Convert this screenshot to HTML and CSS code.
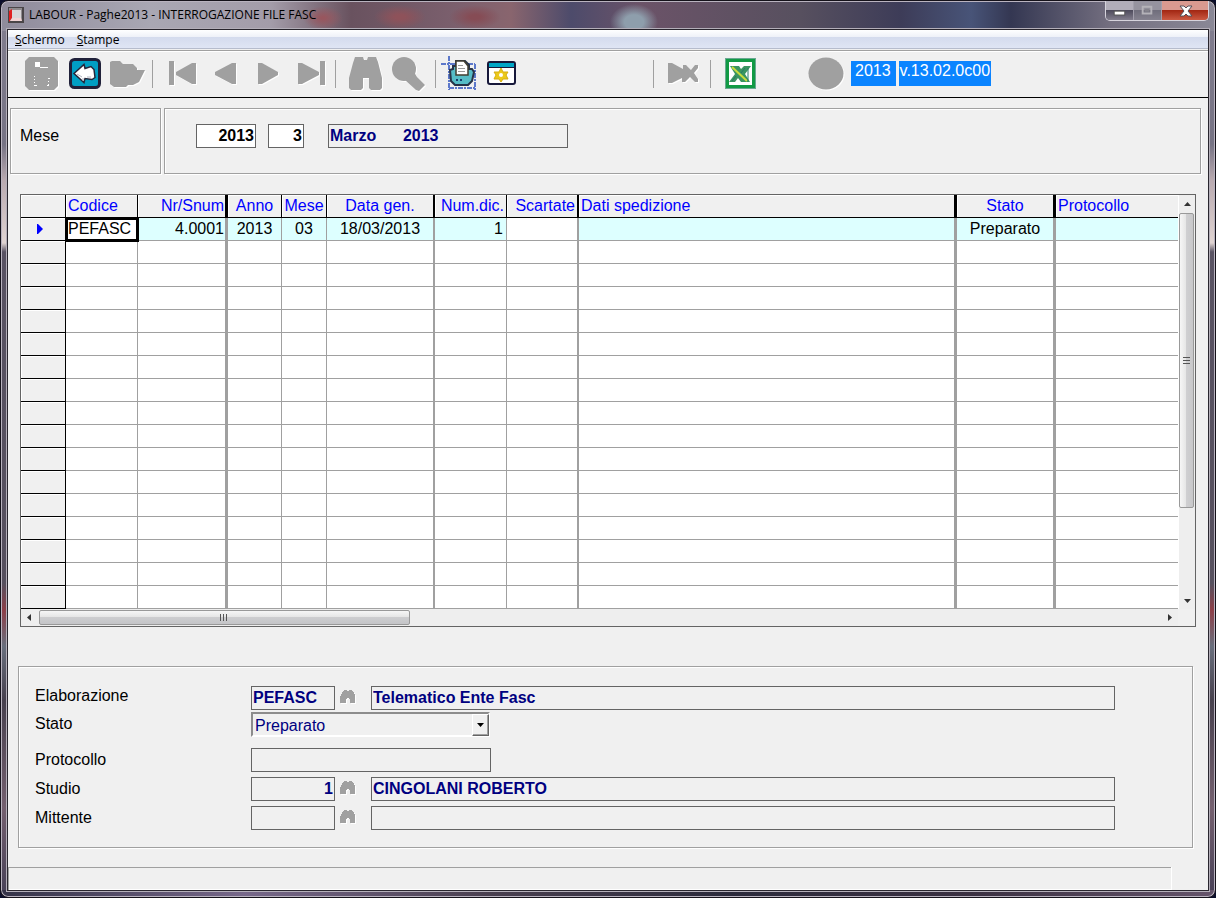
FILE: index.html
```html
<!DOCTYPE html>
<html lang="it">
<head>
<meta charset="utf-8">
<title>LABOUR - Paghe2013 - INTERROGAZIONE FILE FASC</title>
<link rel="stylesheet" href="styles.css">
</head>
<body>
<svg class="defs" aria-hidden="true">
  <symbol id="binoculars" viewBox="0 0 16 16"><path d="M3 2h1V1h3v1h2V1h3v1h1v1h1v2h1v9h-5v-4H9V9H7v1H6v4H0V7h1V5h1V3h1z"/></symbol>
</svg>
<div class="window">
  <header class="titlebar">
    <svg class="app-icon" viewBox="0 0 16 16"><rect width="16" height="16" fill="#4a4648"/><rect x="1" y="1" width="13" height="13" fill="#8f8b8e"/><path d="M4 3h9v9H4z" fill="#d8d6d8"/><path d="M1 4l3-2v9l-3 4z" fill="#e02020"/><path d="M2 14l2-3h9l1 3z" fill="#f1d5d5"/></svg>
    <h1 class="title">LABOUR - Paghe2013 - INTERROGAZIONE FILE FASC</h1>
    <div class="window-buttons">
      <button class="wbtn wbtn-min" aria-label="Riduci a icona"><svg viewBox="0 0 28 18"><rect x="8.500" y="9.500" width="11" height="4" fill="#fff" stroke="#555"/></svg></button>
      <button class="wbtn wbtn-max" aria-label="Ingrandisci"><svg viewBox="0 0 28 18"><path d="M9 5h9v7H9z" fill="none" stroke="#b4b2b8" stroke-width="2"/><path d="M11 7h5v3h-5z" fill="#85838c"/></svg></button>
      <button class="wbtn wbtn-close" aria-label="Chiudi"><svg viewBox="0 0 46 18"><path d="M18 4h4l2 2 2-2h4l-4 5 4 5h-4l-2-2-2 2h-4l4-5z" fill="#fff" stroke="#53505a"/></svg></button>
    </div>
  </header>
  <div class="client">
    <nav class="menubar">
      <a href="#schermo"><u>S</u>chermo</a>
      <a href="#stampe"><u>S</u>tampe</a>
    </nav>
    <div class="toolbar">
      <div class="tools">
        <button class="tool" aria-label="Salva"><svg class="off" viewBox="0 0 43 44"><path d="M9 5h25l4 4v25l-4 4H9l-4-4V9z"/><path d="M15 10h5v5h-5zM20 15h8v1h-8z" fill="#fff"/><path d="M14.500 24v10M28.500 26v8" fill="none" stroke="#fff" stroke-dasharray="1 2"/><path d="M15 33.500h2M28 26.500h2M27 33.500h2" stroke="#fff"/></svg></button>
        <button class="tool" aria-label="Indietro"><svg viewBox="0 0 43 44"><rect x="7.500" y="7.500" width="29" height="28" rx="4" fill="#009fc4" stroke="#20213a" stroke-width="3"/><path d="M11 21.500l10-9 1 4 6-2 3 3 1 8-3 2-7-1-1 4z" fill="#fff" stroke="#26263a" stroke-width="1.500"/><path d="M14 22l5 3M20 26v3M24 25h4" stroke="#b0b4c0" fill="none"/></svg></button>
        <button class="tool" aria-label="Apri"><svg class="off" viewBox="0 0 43 44"><path d="M4 10l2-1h8l3 3h10l4 4v2h8l-6 12-6 3h-5l-2 2H8l-4-3z"/></svg></button>
      </div>
      <div class="tools ruled">
        <button class="tool" aria-label="Primo"><svg class="off" viewBox="0 0 43 44"><path d="M8 9h5v24H8zM35 11v21h-4l-16-9v-3l16-9z"/></svg></button>
        <button class="tool" aria-label="Precedente"><svg class="off" viewBox="0 0 43 44"><path d="M32 11v21h-4l-17-9v-3l17-9z"/></svg></button>
        <button class="tool" aria-label="Successivo"><svg class="off" viewBox="0 0 43 44"><path d="M11 11v21h4l16-9v-3l-16-9z"/></svg></button>
        <button class="tool" aria-label="Ultimo"><svg class="off" viewBox="0 0 43 44"><path d="M30 9h5v24h-5zM8 11v21h4l17-9v-3l-17-9z"/></svg></button>
      </div>
      <div class="tools ruled ruled-find">
        <button class="tool" aria-label="Cerca"><svg class="off" viewBox="0 0 43 44"><path d="M11 5h8l1 3h3l1-3h8l2 5 4 16v10l-2 2h-9l-2-2V26h-6v10l-2 2H7l-2-2V26L9 11z"/></svg></button>
        <button class="tool" aria-label="Zoom"><svg class="off" viewBox="0 0 43 44"><circle cx="17" cy="17" r="12"/><path d="M18 28l9-8 3 5 8 8-6 6-3-1z"/></svg></button>
      </div>
      <div class="tools ruled ruled-print">
        <button class="tool" aria-label="Stampa"><svg viewBox="0 0 43 44"><path d="M12 4v34M4 12h34M12 36h27M38 12v26" fill="none" stroke="#5c78ca" stroke-width="2" stroke-dasharray="5 1 2 1"/><path d="M13 18l3-1v-3h3V9h9l4 4v4h3l2 3-2 9-4 4H18l-4-4z" fill="#56bcc6" stroke="#273348" stroke-width="2"/><path d="M19 23V9h8l4 5v9z" fill="#fff" stroke="#423e30" stroke-width="1.500"/><path d="M21 13.500h5M21 16.500h7M21 19.500h7" stroke="#999"/><path d="M19 28h2M23 28h2" stroke="#183b6b" stroke-width="2"/></svg></button>
        <button class="tool" aria-label="Finestra"><svg viewBox="0 0 43 44"><rect x="8" y="10" width="27" height="22" rx="2" fill="#fff" stroke="#17183a" stroke-width="2"/><path d="M9 11h25v4H9z" fill="#00a5c5"/><path d="M9 15.500h25" stroke="#17183a"/><path d="M21 16l2 4h5l-2 3 2 4h-5l-2 3-2-3h-5l2-4-2-3h5z" fill="#ecc919" stroke="#d6ae10"/><circle cx="21" cy="23" r="2" fill="#fff"/></svg></button>
      </div>
      <div class="tools ruled ruled-run">
        <button class="tool" aria-label="Esegui"><svg class="off" viewBox="0 0 43 44"><path d="M6 11h4l11 6v-4h3l5 5 4-5h3v3l-4 5 4 6v3h-3l-5-5-5 5h-3v-4l-10 5H6z"/></svg></button>
      </div>
      <div class="tools ruled ruled-excel">
        <button class="tool" aria-label="Esporta in Excel"><svg viewBox="0 0 43 44"><rect x="6" y="6" width="31" height="31" fill="#6aa892"/><rect x="8.500" y="8.500" width="26" height="26" fill="#fff" stroke="#129a45" stroke-width="3"/><path d="M11 14h9l2 3 3-3h7l-6 8 5 8h-9l-3-4-3 4h-6l6-8z" fill="#3a9560"/><path d="M13 15l15 14" stroke="#c8dc3c" stroke-width="2"/><path d="M26 16l-4 5M17 24l-4 5M29 16v13" stroke="#257a62" fill="none"/></svg></button>
      </div>
      <svg class="off lamp" viewBox="0 0 36 44"><ellipse cx="18" cy="21.500" rx="17.500" ry="16"/></svg>
      <div class="release"><span>2013</span><span>v.13.02.0c00</span></div>
    </div>

    <main>
      <section class="filters">
        <div class="panel filter-name"><label for="anno">Mese</label></div>
        <div class="panel filter-fields">
          <input class="field edit num year" id="anno" value="2013">
          <input class="field edit num month" aria-label="Numero mese" value="3">
          <input class="field period" aria-label="Periodo" value="Marzo      2013" readonly>
        </div>
      </section>

      <section class="grid">
        <table>
          <colgroup><col class="c-mark"><col class="c-codice"><col class="c-nr"><col class="c-anno"><col class="c-mese"><col class="c-data"><col class="c-num"><col class="c-scartate"><col class="c-dati"><col class="c-stato"><col></colgroup>
          <thead><tr><th></th><th>Codice</th><th class="r w3">Nr/Snum</th><th class="c">Anno</th><th class="c">Mese</th><th class="c w2">Data gen.</th><th class="r pad">Num.dic.</th><th class="r w2">Scartate</th><th class="w3">Dati spedizione</th><th class="c w3">Stato</th><th class="last">Protocollo</th></tr></thead>
          <tbody>
            <tr class="current"><th><svg class="marker" viewBox="0 0 6 10"><path d="M0 0h1l5 5-5 5H0z"/></svg></th><td class="focus">PEFASC</td><td class="r w3">4.0001</td><td class="c">2013</td><td class="c">03</td><td class="c w2">18/03/2013</td><td class="r pad">1</td><td class="blank w2"></td><td class="w3"></td><td class="c w3">Preparato</td><td class="last"></td></tr>
            <tr><th></th><td></td><td class="w3"></td><td></td><td></td><td class="w2"></td><td></td><td class="w2"></td><td class="w3"></td><td class="w3"></td><td class="last"></td></tr>
            <tr><th></th><td></td><td class="w3"></td><td></td><td></td><td class="w2"></td><td></td><td class="w2"></td><td class="w3"></td><td class="w3"></td><td class="last"></td></tr>
            <tr><th></th><td></td><td class="w3"></td><td></td><td></td><td class="w2"></td><td></td><td class="w2"></td><td class="w3"></td><td class="w3"></td><td class="last"></td></tr>
            <tr><th></th><td></td><td class="w3"></td><td></td><td></td><td class="w2"></td><td></td><td class="w2"></td><td class="w3"></td><td class="w3"></td><td class="last"></td></tr>
            <tr><th></th><td></td><td class="w3"></td><td></td><td></td><td class="w2"></td><td></td><td class="w2"></td><td class="w3"></td><td class="w3"></td><td class="last"></td></tr>
            <tr><th></th><td></td><td class="w3"></td><td></td><td></td><td class="w2"></td><td></td><td class="w2"></td><td class="w3"></td><td class="w3"></td><td class="last"></td></tr>
            <tr><th></th><td></td><td class="w3"></td><td></td><td></td><td class="w2"></td><td></td><td class="w2"></td><td class="w3"></td><td class="w3"></td><td class="last"></td></tr>
            <tr><th></th><td></td><td class="w3"></td><td></td><td></td><td class="w2"></td><td></td><td class="w2"></td><td class="w3"></td><td class="w3"></td><td class="last"></td></tr>
            <tr><th></th><td></td><td class="w3"></td><td></td><td></td><td class="w2"></td><td></td><td class="w2"></td><td class="w3"></td><td class="w3"></td><td class="last"></td></tr>
            <tr><th></th><td></td><td class="w3"></td><td></td><td></td><td class="w2"></td><td></td><td class="w2"></td><td class="w3"></td><td class="w3"></td><td class="last"></td></tr>
            <tr><th></th><td></td><td class="w3"></td><td></td><td></td><td class="w2"></td><td></td><td class="w2"></td><td class="w3"></td><td class="w3"></td><td class="last"></td></tr>
            <tr><th></th><td></td><td class="w3"></td><td></td><td></td><td class="w2"></td><td></td><td class="w2"></td><td class="w3"></td><td class="w3"></td><td class="last"></td></tr>
            <tr><th></th><td></td><td class="w3"></td><td></td><td></td><td class="w2"></td><td></td><td class="w2"></td><td class="w3"></td><td class="w3"></td><td class="last"></td></tr>
            <tr><th></th><td></td><td class="w3"></td><td></td><td></td><td class="w2"></td><td></td><td class="w2"></td><td class="w3"></td><td class="w3"></td><td class="last"></td></tr>
            <tr><th></th><td></td><td class="w3"></td><td></td><td></td><td class="w2"></td><td></td><td class="w2"></td><td class="w3"></td><td class="w3"></td><td class="last"></td></tr>
            <tr><th></th><td></td><td class="w3"></td><td></td><td></td><td class="w2"></td><td></td><td class="w2"></td><td class="w3"></td><td class="w3"></td><td class="last"></td></tr>
          </tbody>
        </table>
        <div class="scroll scroll-v">
          <button class="arrow" aria-label="Scorri su"><svg viewBox="0 0 17 17"><path d="M5 10l3.500-4 3.500 4z"/></svg></button>
          <div class="track"><div class="thumb"><svg viewBox="0 0 8 8"><path d="M0 1.500h7M0 4.500h7M0 7.500h7"/></svg></div></div>
          <button class="arrow" aria-label="Scorri giù"><svg viewBox="0 0 17 17"><path d="M5 7l3.500 4 3.500-4z"/></svg></button>
        </div>
        <div class="scroll scroll-h">
          <button class="arrow" aria-label="Scorri a sinistra"><svg viewBox="0 0 17 17"><path d="M10 5L6 8.500 10 12z"/></svg></button>
          <div class="track"><div class="thumb"><svg viewBox="0 0 8 8"><path d="M.5 0v7M3.500 0v7M6.500 0v7"/></svg></div></div>
          <button class="arrow" aria-label="Scorri a destra"><svg viewBox="0 0 17 17"><path d="M7 5l4 3.500L7 12z"/></svg></button>
        </div>
      </section>

      <section class="panel details">
        <div class="row first">
          <label for="elab">Elaborazione</label>
          <input class="field code" id="elab" value="PEFASC" readonly>
          <button class="lookup" aria-label="Cerca elaborazione"><svg><use href="#binoculars"/></svg></button>
          <input class="field wide" aria-label="Descrizione elaborazione" value="Telematico Ente Fasc" readonly>
        </div>
        <div class="row state">
          <label for="stato">Stato</label>
          <div class="combo">
            <select id="stato"><option>Preparato</option></select>
            <span class="drop"><svg viewBox="0 0 7 4"><path d="M0 0h7L3.500 4z"/></svg></span>
          </div>
        </div>
        <div class="row">
          <label for="prot">Protocollo</label>
          <input class="field protocol" id="prot" readonly>
        </div>
        <div class="row">
          <label for="studio">Studio</label>
          <input class="field code num" id="studio" value="1" readonly>
          <button class="lookup" aria-label="Cerca studio"><svg><use href="#binoculars"/></svg></button>
          <input class="field wide" aria-label="Nome studio" value="CINGOLANI ROBERTO" readonly>
        </div>
        <div class="row">
          <label for="mitt">Mittente</label>
          <input class="field code num" id="mitt" readonly>
          <button class="lookup" aria-label="Cerca mittente"><svg><use href="#binoculars"/></svg></button>
          <input class="field wide" aria-label="Nome mittente" readonly>
        </div>
      </section>
    </main>
    <footer class="statusbar"></footer>
  </div>
</div>
</body>
</html>
```

FILE: styles.css
```css
* { box-sizing: border-box; }

body {
  margin: 0;
  background: #0a0d2a;
  color: #000;
  font: 16px/22px "Liberation Sans", Arial, sans-serif;
}

button, input, select { font: inherit; margin: 0; }
button { padding: 0; border: 0; background: none; }
svg { display: block; }
.defs { display: none; }

/* Window frame */
.window {
  display: flex;
  flex-direction: column;
  min-height: 100vh;
  padding: 0 6px 6px;
  border: 1px solid #15121a;
  border-radius: 8px;
  box-shadow: inset 0 0 0 1px #b9b3bf;
  background:
    radial-gradient(ellipse 26px 12px at 399px 16px, #8e525a 20%, transparent),
    radial-gradient(ellipse 26px 12px at 474px 16px, #864c55 20%, transparent),
    radial-gradient(ellipse 20px 12px at 322px 17px, #98565e 10%, transparent),
    radial-gradient(ellipse 24px 18px at 633px 21px, #8e9eac 40%, transparent),
    linear-gradient(90deg, #8f8b9b 0, #a9a7b3 150px, #a39ca9 270px, #69525f 350px, #7c606e 460px, #89656e 510px, #4d4b6b 570px, #6b5368 640px, #57505f 800px, #3d3c58 900px, #485478 970px, #343752 1010px, #746f80 1110px, #8a8896 100%) 0 0 / 100% 30px no-repeat,
    linear-gradient(90deg, #343348, #77688a 20%, #4a4050 40%, #2c2b3c 60%, #3b3142 80%, #65546b) 0 100% / 100% 7px no-repeat,
    linear-gradient(#837f90, #767384 16%, #b9aab0 20%, #e0d4d2 27%, #595363 28%, #56505e 65%, #8d3f48 68%, #696f7d 72%, #47414e 78%, #74606f 90%, #464056);
}

.titlebar { display: flex; height: 28px; align-items: center; padding-left: 1px; }
.app-icon { width: 16px; height: 16px; }
.title {
  flex: 1;
  margin: 0;
  padding-left: 5px;
  font: 12px/16px "Open Sans", "Noto Sans", sans-serif;
}
.window-buttons {
  display: flex;
  align-self: flex-start;
  height: 20px;
  border: 1px solid #d6d3dc;
  border-top: 0;
  border-radius: 0 0 5px 5px;
  overflow: hidden;
}
.wbtn {
  width: 28px;
  height: 19px;
  border-right: 1px solid #a29fac;
  background: linear-gradient(#b1adb9 50%, #4f4c5d 50%, #817d8c);
}
.wbtn-max { background: linear-gradient(#96939f 50%, #706e7c 50%, #85828f); }
.wbtn-close { width: 46px; border: 0; background: linear-gradient(#d99a90 50%, #a32814 50%, #cb5942); }

.client {
  display: flex;
  flex: 1;
  flex-direction: column;
  border: 1px solid #29262e;
  box-shadow: 0 0 0 1px #b4afb9;
  background: #f0f0f0;
}

/* Menu and toolbar */
.menubar {
  display: flex;
  gap: 12px;
  height: 22px;
  padding-left: 7px;
  border-bottom: 1px solid #fff;
  background: linear-gradient(#fff, #eef1f8 7px, #d4dbed 7px, #dfe5f4 18px, #b6bccc 18px, #b6bccc 19px, #f0f0f0 19px, #f0f0f0 20px, #a0a0a0 20px);
}
.menubar a { color: #000; font: 12px/20px "Open Sans", "Noto Sans", sans-serif; text-decoration: none; }

.toolbar { display: flex; height: 46px; padding-left: 12px; border-bottom: 1px solid #000; }
.tools { display: flex; }
.tool { width: 43px; height: 44px; }
.off { fill: #a0a0a0; filter: drop-shadow(1px 1px 0 #fff); }
.ruled { padding-left: 12px; background: linear-gradient(#a0a0a0, #a0a0a0) 3px 8px / 1px 28px no-repeat; }
.ruled-find { padding-left: 11px; background-position: 2px 8px; }
.ruled-print { padding-left: 7px; background-position: 5px 8px; }
.ruled-run { margin-left: 127px; }
.ruled-excel { padding-left: 14px; background-position: 5px 8px; }
.lamp { width: 36px; height: 44px; margin-left: 46px; }
.release { display: flex; gap: 3px; margin: 9px 0 0 7px; }
.release span { height: 25px; padding: 0 5px 0 4px; background: #0a84ff; color: #fff; line-height: 20px; }
.release span + span { padding: 0 1px; }

/* Etched panels and fields */
.panel { border: 1px solid #a0a0a0; box-shadow: 1px 1px 0 #fff, inset 1px 1px 0 #fff; }
.field {
  height: 24px;
  min-width: 0;
  padding: 0 1px;
  border: 1px solid #646464;
  border-radius: 0;
  outline: 0;
  background: #f0f0f0;
  color: #000080;
  font-weight: bold;
  white-space: pre;
}
.edit { background: #fff; color: #000; }
.num { text-align: right; }

main { flex: 1; }
.filters { display: flex; gap: 3px; margin: 10px 7px 0 2px; }
.filters .panel { height: 66px; padding-top: 15px; }
.filter-name { width: 151px; padding-left: 9px; }
.filter-name label { display: block; line-height: 24px; }
.filter-fields { display: flex; flex: 1; padding-left: 31px; }
.year { width: 60px; margin-right: 12px; }
.month { width: 36px; margin-right: 24px; }
.period { width: 240px; }

/* Data grid */
.grid {
  display: grid;
  grid-template-columns: 1fr 17px;
  grid-template-rows: auto 17px;
  margin: 20px 12px 0;
  border: 1px solid #646464;
}
table { width: 100%; border-collapse: separate; border-spacing: 0; table-layout: fixed; background: #fff; }
.c-mark, .c-mese { width: 45px; }
.c-codice, .c-num, .c-scartate { width: 72px; }
.c-nr { width: 90px; }
.c-anno { width: 54px; }
.c-data { width: 108px; }
.c-dati { width: 378px; }
.c-stato { width: 99px; }
th, td {
  height: 23px;
  padding: 0 2px;
  border: solid #a0a0a0;
  border-width: 0 1px 1px 0;
  font-weight: normal;
  line-height: 22px;
  text-align: left;
  white-space: nowrap;
}
th { border-color: #000; background: #f0f0f0; box-shadow: inset 1px 1px 0 #fff; color: #00f; }
.r { text-align: right; }
th.r, td.r { padding-right: 1px; }
.c { text-align: center; }
td.pad { padding-right: 3px; }
th.pad, th.w2 { padding-right: 2px; }
.w2 { border-right-width: 2px; }
.w3 { border-right-width: 3px; }
.last { border-right-width: 0; }
.current td { background: #dff; }
.current .focus { background: #fff; outline: 3px solid #000; outline-offset: -2px; }
.current .blank { background: #fff; }
.marker { width: 6px; height: 10px; margin: 0 auto; fill: #00f; }
tbody th { padding-right: 8px; }

.scroll { display: flex; background: #eee; }
.scroll-v { flex-direction: column; border-left: 1px solid #fff; }
.arrow { width: 17px; height: 17px; flex: none; }
.scroll-v .arrow { width: 16px; height: 18px; }
.arrow svg { width: 17px; height: 17px; fill: #333; }
.track { flex: 1; }
.thumb { display: flex; align-items: center; justify-content: center; border: 1px solid #999; border-radius: 2px; }
.thumb svg { width: 8px; height: 8px; stroke: #555; fill: none; }
.scroll-v .thumb { width: 15px; height: 78%; background: linear-gradient(90deg, #f6f6f6, #e4e4e4 50%, #cfcfd1 50%, #c8c8ca); }
.scroll-h .thumb { width: 33%; height: 15px; margin: 1px 0 0 1px; background: linear-gradient(#f6f6f6, #e4e4e4 50%, #cdcdcf 50%, #c4c5c8); }

/* Record details */
.details { margin: 39px 15px 0 10px; padding: 19px 77px 17px 16px; }
.row { display: flex; margin-top: 5px; }
.row label { width: 216px; line-height: 24px; }
.row.first { margin-top: 0; }
.row.first label { line-height: 20px; }
.row.state { margin: 2px 0 11px; }
.code { width: 84px; }
.wide { flex: 1; }
.protocol { width: 240px; }
.lookup { display: flex; width: 36px; padding: 3px 0 0 5px; }
.lookup svg { width: 16px; height: 16px; fill: #a0a0a0; filter: drop-shadow(1px 1px 0 #fff); }
.combo { position: relative; width: 239px; height: 25px; }
.combo select {
  width: 100%;
  height: 100%;
  padding: 1px 2px 0;
  border: 2px solid;
  border-color: #8c8c8c #fff #fff #8c8c8c;
  border-radius: 0;
  appearance: none;
  background: #f0f0f0;
  color: #000080;
}
.drop {
  position: absolute;
  inset: 2px 1px 1px auto;
  display: grid;
  width: 17px;
  place-items: center;
  border: 1px solid;
  border-color: #fff #646464 #646464 #fff;
  background: #f0f0f0;
  box-shadow: inset -1px -1px 0 #a0a0a0;
  pointer-events: none;
}
.drop svg { width: 7px; height: 4px; }

.statusbar {
  height: 23px;
  margin: 19px 37px 0 0;
  border: solid #a0a0a0;
  border-width: 1px 0 0 1px;
  box-shadow: 1px 0 0 #fff, inset 0 -1px 0 #fff;
}
```
